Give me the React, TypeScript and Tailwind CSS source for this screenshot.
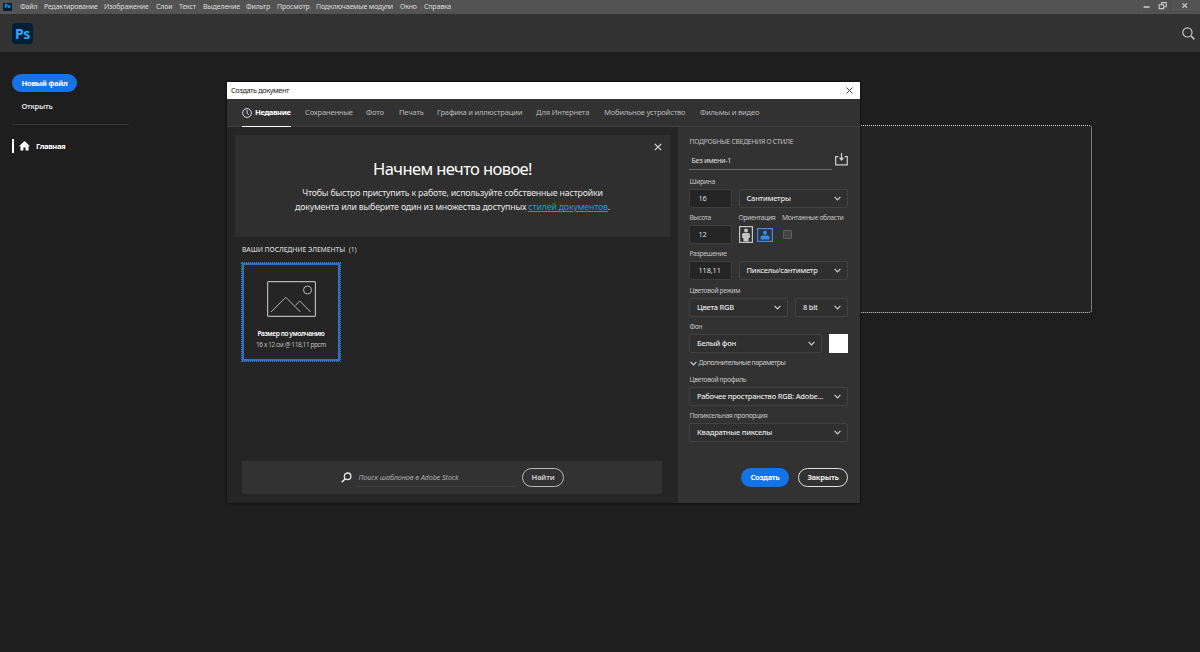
import type { ReactNode } from "react";
import clsx from "clsx";

const MENU = [
  { label: "Файл", cls: "w-[24px]" },
  { label: "Редактирование", cls: "w-[60px]" },
  { label: "Изображение", cls: "w-[52px]" },
  { label: "Слои", cls: "w-[23px]" },
  { label: "Текст", cls: "w-[24px]" },
  { label: "Выделение", cls: "w-[43px]" },
  { label: "Фильтр", cls: "w-[31px]" },
  { label: "Просмотр", cls: "w-[39px]" },
  { label: "Подключаемые модули", cls: "w-[84px]" },
  { label: "Окно", cls: "w-[24px]" },
  { label: "Справка", cls: "w-[30px]" },
];

const TABS = [
  { label: "Сохраненные", cls: "w-[61px]" },
  { label: "Фото", cls: "w-[33px]" },
  { label: "Печать", cls: "w-[38px]" },
  { label: "Графика и иллюстрации", cls: "w-[99px]" },
  { label: "Для Интернета", cls: "w-[68px]" },
  { label: "Мобильное устройство", cls: "w-[96px]" },
  { label: "Фильмы и видео", cls: "w-[70px]" },
];

function PsLogo({ className, textClass }: { className: string; textClass: string }) {
  return (
    <div
      className={clsx(
        "flex shrink-0 items-center justify-center bg-[#001e36] font-bold text-[#31a8ff]",
        className,
      )}
    >
      <span className={textClass}>Ps</span>
    </div>
  );
}

function Chevron() {
  return (
    <svg className="h-[5px] w-[7px] shrink-0" viewBox="0 0 7 5" fill="none" stroke="#d4d4d4" strokeWidth="1.1">
      <path d="M.6 .9 3.5 3.9 6.4 .9" />
    </svg>
  );
}

function Field({ label, className, children }: { label: string; className?: string; children: ReactNode }) {
  return (
    <div className={className}>
      <div className="h-[12px] pl-[0.5px] text-[6.8px] leading-[12px] tracking-[-0.38px] whitespace-nowrap text-[#c4c4c4]">
        {label}
      </div>
      <div className="mt-px flex h-[19px]">{children}</div>
    </div>
  );
}

function NumberBox({ value }: { value: string }) {
  return (
    <div className="flex h-full w-[43px] shrink-0 items-center rounded-[2px] border border-[#3f3f3f] bg-[#252525] pl-[8.5px] text-[7.3px] tracking-[-0.1px] text-[#dedede]">
      {value}
    </div>
  );
}

function Select({ value, className }: { value: string; className: string }) {
  return (
    <div
      className={clsx(
        "flex h-full shrink-0 items-center justify-between rounded-[2px] border border-[#424242] bg-[#2f2f2f] pr-[6px] pl-[7px] text-[7.5px] font-medium tracking-[-0.22px] whitespace-nowrap text-[#e4e4e4]",
        className,
      )}
    >
      <span>{value}</span>
      <Chevron />
    </div>
  );
}

function Orientation() {
  return (
    <div className="flex items-center gap-[4px] pl-px">
      <svg className="h-[17px] w-[14px]" viewBox="0 0 14 17">
        <rect x=".6" y=".6" width="12.8" height="15.8" fill="none" stroke="#c4c4c4" strokeWidth="1.2" />
        <circle cx="7" cy="4.5" r="2" fill="#c4c4c4" />
        <path d="M4.6 7h4.8q1.5 0 1.5 1.5V12H9.6v3.6H4.4V12H3.1V8.5Q3.1 7 4.6 7z" fill="#c4c4c4" />
      </svg>
      <svg className="mt-px h-[14px] w-[16px]" viewBox="0 0 16 14">
        <rect x=".6" y=".6" width="14.8" height="12.8" fill="none" stroke="#378ef0" strokeWidth="1.2" />
        <circle cx="8" cy="4.8" r="2" fill="#378ef0" />
        <path d="M3.6 11.4V9Q3.6 7.4 5.2 7.4h5.6q1.6 0 1.6 1.6v2.4z" fill="#378ef0" />
      </svg>
    </div>
  );
}

function MenuBar() {
  return (
    <div className="flex h-[14px] items-center justify-between bg-[#535353] text-[7px] tracking-[-0.18px] text-[#dcdcdc]">
      <div className="flex items-center pl-[3px]">
        <PsLogo className="mr-[8px] h-[8px] w-[9px] rounded-[1px]" textClass="text-[5.5px] leading-none" />
        {MENU.map((m) => (
          <span key={m.label} className={clsx("leading-[10px] whitespace-nowrap", m.cls)}>
            {m.label}
          </span>
        ))}
      </div>
      <svg className="h-[14px] w-[62px]" viewBox="0 0 62 14" fill="none" stroke="#c8c8c8">
        <path d="M.5 0v11.5h32M16.5 0v11.5M32.5 0v11.5h29.5" stroke="#4b4b4b" />
        <path d="M5.5 7h6" strokeWidth="1.6" />
        <path d="M21.2 4.8h4.4v3.8h-4.4zM23.6 4.4V2.6h4.6v4.2h-2.2" strokeWidth="1.1" />
        <path d="m44.4 3.4 4.6 4.4m0-4.4-4.6 4.4" strokeWidth="1.3" />
      </svg>
    </div>
  );
}

function Sidebar() {
  return (
    <aside className="w-[129px] pt-[22px] pl-[12px]">
      <button className="flex h-[18px] w-[65px] items-center justify-center rounded-full bg-[#1473e6] pt-px text-[7.7px] font-bold tracking-[-0.38px] text-white">
        Новый файл
      </button>
      <div className="mt-[8px] pl-[9.5px] text-[7.6px] leading-[12px] font-semibold tracking-[-0.3px] text-[#e0e0e0]">
        Открыть
      </div>
      <div className="mt-[12px] h-px bg-[#343434]" />
      <div className="mt-[14px] flex h-[14px] items-center">
        <div className="h-full w-[2px] bg-white" />
        <svg className="ml-[5px] h-[10px] w-[11px]" viewBox="0 0 11 10" fill="#fff">
          <path d="M5.5 0 11 5.3H9.5V9.6H6.6V6.4H4.4v3.2H1.5V5.3H0z" />
        </svg>
        <span className="mt-px ml-[6px] text-[7.6px] font-bold tracking-[-0.38px] text-white">Главная</span>
      </div>
    </aside>
  );
}

function TabBar() {
  return (
    <div className="flex h-[28px] border-b border-[#404040] bg-[#323232] pl-[15px] text-[7.6px] tracking-[-0.2px] text-[#b8b8b8]">
      <div className="mr-[14px] -mb-px flex h-[28px] w-[49px] items-center border-b border-white font-bold whitespace-nowrap text-white">
        <svg className="mr-[3px] h-[10px] w-[10px] shrink-0" viewBox="0 0 10 10" fill="none" stroke="#eee" strokeWidth=".9">
          <circle cx="5" cy="5" r="4.4" />
          <path d="M5 2v3.2l1.8 1.6" />
        </svg>
        <span className="tracking-[-0.4px]">Недавние</span>
      </div>
      {TABS.map((t) => (
        <span key={t.label} className={clsx("shrink-0 leading-[27px] whitespace-nowrap", t.cls)}>
          {t.label}
        </span>
      ))}
    </div>
  );
}

function Recent() {
  return (
    <section className="flex w-[451px] flex-col bg-[#252525] pt-[8px]">
      <div className="relative ml-[8px] h-[102px] w-[435px] bg-[#2f2f2f] pt-[24px] text-center">
        <svg className="absolute top-[8px] right-[8px] h-[8px] w-[8px]" viewBox="0 0 8 8" stroke="#d8d8d8" strokeWidth="1.2">
          <path d="m.8.8 6.4 6.4m0-6.4L.8 7.2" />
        </svg>
        <h1 className="text-[16.5px] leading-[20px] tracking-[-0.6px] text-white">Начнем нечто новое!</h1>
        <p className="mt-[7px] text-[8.8px] leading-[14px] tracking-[-0.18px] text-[#e6e6e6]">
          Чтобы быстро приступить к работе, используйте собственные настройки
          <br />
          документа или выберите один из множества доступных{" "}
          <a className="text-[#1f9bd8] underline">стилей документов</a>.
        </p>
      </div>
      <div className="mt-[7px] ml-[15px] text-[6.8px] leading-[12px] font-medium tracking-[-0.08px] text-[#cfcfcf]">
        ВАШИ ПОСЛЕДНИЕ ЭЛЕМЕНТЫ <span className="ml-[2px] font-normal">(1)</span>
      </div>
      <div className="mt-[6px] ml-[14px] flex h-[100px] w-[100px] flex-col items-center border border-dotted border-[#2f7fdc]">
        <div className="flex h-full w-full flex-col items-center border-2 border-[#2d72c4] pt-[16px]">
          <svg className="h-[36px] w-[49px] shrink-0" viewBox="0 0 49 36" fill="none" stroke="#b4b4b4">
            <rect x=".6" y=".6" width="47.8" height="34.8" rx="1" strokeWidth="1.2" />
            <circle cx="40.5" cy="9" r="4" />
            <path d="M4 31 18.8 16.3 33.4 31M28.4 24.4l4.4-4.4L43.6 31" />
          </svg>
          <div className="mt-[12px] text-[6.6px] leading-[10px] font-semibold tracking-[-0.42px] whitespace-nowrap text-white">
            Размер по умолчанию
          </div>
          <div className="text-[6.5px] leading-[11px] tracking-[-0.42px] whitespace-nowrap text-[#bdbdbd]">
            16 x 12 см @ 118,11 ppcm
          </div>
        </div>
      </div>
      <div className="mt-auto mb-[9px] ml-[15px] flex h-[33px] w-[420px] items-center bg-[#323232] pl-[99px]">
        <svg className="h-[11px] w-[11px]" viewBox="0 0 11 11" fill="none" stroke="#e8e8e8" strokeWidth="1.3">
          <circle cx="6.6" cy="4.3" r="3.3" />
          <path d="M4.3 6.7.7 10.3" strokeWidth="1.6" />
        </svg>
        <div className="ml-[4px] h-[18px] w-[160px] border-b border-[#404040] pl-[2.5px] text-[7.3px] leading-[17px] tracking-[-0.13px] text-[#aaaaaa] italic">
          Поиск шаблонов в Adobe Stock
        </div>
        <button className="ml-[6px] flex h-[19px] w-[42px] items-center justify-center rounded-full border border-[#b8b8b8] text-[7.6px] font-semibold tracking-[-0.2px] text-[#cfcfcf]">
          Найти
        </button>
      </div>
    </section>
  );
}

function Details() {
  return (
    <section className="w-[182px] bg-[#323232] pt-[9px] pl-[11px]">
      <div className="pl-[0.5px] text-[6.8px] leading-[12px] tracking-[-0.29px] text-[#c0c0c0]">
        ПОДРОБНЫЕ СВЕДЕНИЯ О СТИЛЕ
      </div>
      <div className="mt-[3px] flex h-[19px]">
        <div className="h-full w-[143px] border-b border-[#6a6a6a] pl-[2.5px] text-[7.3px] leading-[19px] tracking-[-0.38px] text-[#dedede]">
          Без имени-1
        </div>
        <svg className="mt-[2px] ml-[3px] h-[13px] w-[13px]" viewBox="0 0 13 13" fill="none" stroke="#d0d0d0" strokeWidth="1.2">
          <path d="M3.4 3.6H.7v8.3h11.6V3.6H9.6M6.5 0v7" />
          <path d="M3.8 4.8h5.4L6.5 7.9z" fill="#d0d0d0" stroke="none" />
        </svg>
      </div>
      <Field label="Ширина" className="mt-[6px]">
        <NumberBox value="16" />
        <Select value="Сантиметры" className="ml-[6.5px] w-[109px]" />
      </Field>
      <div className="mt-[4px] flex">
        <Field label="Высота" className="w-[49px]">
          <NumberBox value="12" />
        </Field>
        <Field label="Ориентация" className="w-[43.5px]">
          <Orientation />
        </Field>
        <Field label="Монтажные области">
          <div className="mt-[5px] ml-px h-[9px] w-[9px] rounded-[1px] border border-[#5f5f5f] bg-[#444444]" />
        </Field>
      </div>
      <Field label="Разрешение" className="mt-[4px]">
        <NumberBox value="118,11" />
        <Select value="Пикселы/сантиметр" className="ml-[6.5px] w-[109px]" />
      </Field>
      <Field label="Цветовой режим" className="mt-[5px]">
        <Select value="Цвета RGB" className="w-[99px]" />
        <Select value="8 bit" className="ml-[7px] w-[53px]" />
      </Field>
      <Field label="Фон" className="mt-[4px]">
        <Select value="Белый фон" className="w-[133px]" />
        <div className="ml-[7px] h-[19px] w-[19px] bg-white" />
      </Field>
      <div className="mt-[4px] flex h-[12px] items-center gap-[1.5px] pl-px text-[6.9px] tracking-[-0.44px] text-[#c8c8c8]">
        <Chevron />
        Дополнительные параметры
      </div>
      <Field label="Цветовой профиль" className="mt-[5px]">
        <Select value="Рабочее пространство RGB: Adobe..." className="w-[159px]" />
      </Field>
      <Field label="Попиксельная пропорция" className="mt-[4px]">
        <Select value="Квадратные пикселы" className="w-[159px]" />
      </Field>
      <div className="mt-[26px] flex h-[19px] gap-[9px] pl-[52px] text-[7.6px] font-bold">
        <button className="w-[48px] rounded-full bg-[#1473e6] tracking-[-0.3px] text-white">Создать</button>
        <button className="w-[50px] rounded-full border border-[#e0e0e0] tracking-[-0.3px] text-[#e6e6e6]">
          Закрыть
        </button>
      </div>
    </section>
  );
}

function NewDocumentDialog() {
  return (
    <div className="absolute top-[82px] left-[227px] flex h-[421px] w-[633px] flex-col shadow-[0_0_2px_#000]">
      <div className="flex h-[17px] items-center justify-between bg-white pr-[7px] pl-[4px] text-[7.3px] tracking-[-0.38px] text-[#222]">
        Создать документ
        <svg className="h-[7px] w-[7px]" viewBox="0 0 7 7" stroke="#333" strokeWidth=".9">
          <path d="m.5.5 6 6m0-6-6 6" />
        </svg>
      </div>
      <TabBar />
      <div className="flex flex-1">
        <Recent />
        <Details />
      </div>
    </div>
  );
}

export default function App() {
  return (
    <div className="relative flex h-[652px] w-[1200px] flex-col overflow-hidden bg-[#1e1e1e] font-['Noto_Sans','Open_Sans',sans-serif]">
      <MenuBar />
      <header className="flex h-[38px] items-center justify-between bg-[#323232] pr-[5px] pl-[12px]">
        <PsLogo className="h-[21px] w-[21px] rounded-[4px] pt-px" textClass="text-[14px] leading-[14px] tracking-[-0.3px]" />
        <svg className="h-[13px] w-[13px]" viewBox="0 0 13 13" fill="none" stroke="#c8c8c8" strokeWidth="1.2">
          <circle cx="5.4" cy="5.4" r="4.6" />
          <path d="m8.8 8.8 3.6 3.6" strokeWidth="1.5" />
        </svg>
      </header>
      <div className="flex flex-1 justify-between">
        <Sidebar />
        {/* drop area, mostly hidden behind the dialog */}
        <div className="mt-[73px] mr-[108px] h-[188px] w-[800px] rounded-[3px] border border-dotted border-[#d0d0d0] bg-[#242424]" />
      </div>
      <NewDocumentDialog />
    </div>
  );
}
